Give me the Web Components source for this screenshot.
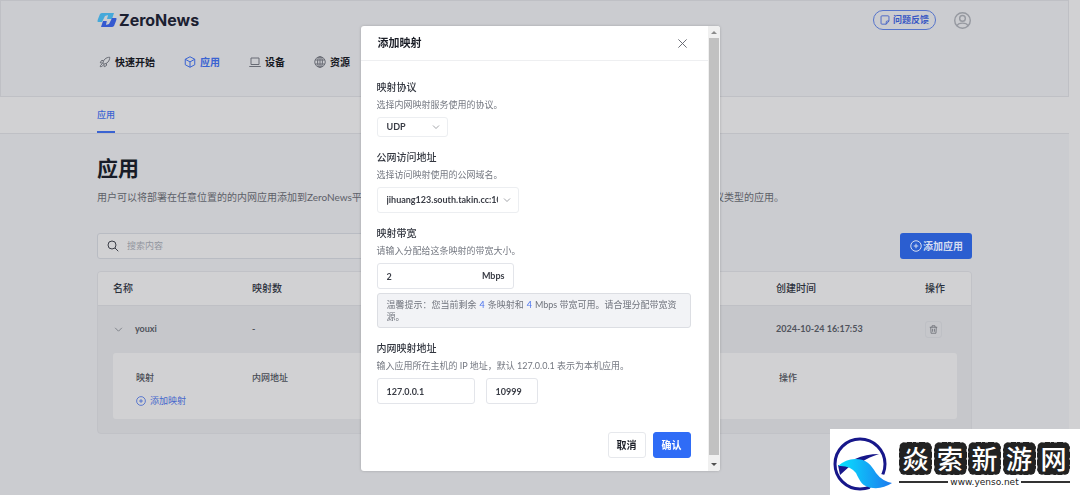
<!DOCTYPE html>
<html lang="zh-CN">
<head>
<meta charset="utf-8">
<title>ZeroNews</title>
<style>
html{background:#d1d1d3}
body{margin:0;min-height:100vh;overflow:hidden;font:10px/16px Lato,"Noto Sans CJK SC",sans-serif;color:#2b303b;
--page:#cbccd0;--surface:#d1d1d3;--line:#bfc0c5;--blue:#3a63d2;--column:875px}
</style>
</head>
<body>
<zn-app></zn-app>
<script>
const box='*{box-sizing:border-box}a{color:inherit;text-decoration:none}button,input,select{font:inherit;color:inherit;margin:0}';
const define=(name,css,html,setup)=>{
  const t=document.createElement('template');
  t.innerHTML=`<style>${box}${css}</style>${html}`;
  customElements.define(name,class extends HTMLElement{
    constructor(){super();this.attachShadow({mode:'open'}).append(t.content.cloneNode(true));}
    connectedCallback(){if(setup)setup(this,this.shadowRoot);}
  });
};

const icons={
  rocket:'<path d="M8 14.500C8 8 14 2.500 21.500 2.500C21.500 10 16 16 9.500 16Z"/><path d="M8.500 9H5L2.500 13.500L8 14.500M15 15V19L10.500 21.500L9.500 16M6 16.500C3 17.500 3 19 2.500 21.500C5 21 7 21 8 18.500"/>',
  cube:'<path d="M12 1.500L21.500 6.500V17.500L12 22.500L2.500 17.500V6.500ZM2.500 6.500L12 11.800L21.500 6.500M12 11.800V22.500"/>',
  laptop:'<path d="M4 4H20V17H4ZM0.500 21H23.500"/>',
  globe:'<circle cx="12" cy="12" r="10.500"/><ellipse cx="12" cy="12" rx="4.800" ry="10.500"/><path d="M2.500 8H21.500M2.500 16H21.500M12 1.500V22.500"/>',
  note:'<path d="M15 22H4.500Q2.500 22 2.500 20V4Q2.500 2 4.500 2H19.500Q21.500 2 21.500 4V14.500L15 22V16.500Q15 14.500 17 14.500H21.500"/>',
  user:'<circle cx="12" cy="12" r="11"/><circle cx="12" cy="9" r="4"/><path d="M4.500 19.500C6 14.500 18 14.500 19.500 19.500"/>',
  search:'<circle cx="10" cy="10" r="8"/><path d="M16 16L22.500 22.500"/>',
  plus:'<circle cx="12" cy="12" r="10.500"/><path d="M12 7.500V16.500M7.500 12H16.500"/>',
  down:'<path d="M3 7.500L12 16.500L21 7.500"/>',
  close:'<path d="M3 3L21 21M21 3L3 21"/>',
  trash:'<path d="M2 6H22M8 6V2H16V6M4.500 6L5.500 22H18.500L19.500 6M9.500 10V18M14.500 10V18"/>'
};
define('zn-icon',':host{display:inline-flex;flex:none;width:12px;height:12px}svg{width:100%;height:100%;fill:none;stroke:currentColor;stroke-width:2;stroke-linejoin:round}',
 '<svg viewBox="0 0 24 24" aria-hidden="true"></svg>',(el,r)=>{r.querySelector('svg').innerHTML=icons[el.getAttribute('name')];});

define('zn-nav-item',':host{display:block;color:#16181f}:host([current]){color:var(--blue)}a{display:flex;align-items:center;gap:4px;font-weight:700}zn-icon{color:#686b74}:host([current]) zn-icon{color:inherit}',
 '<a href="#"><zn-icon name="cube"></zn-icon><slot></slot></a>',(el,r)=>{
   const i=document.createElement('zn-icon');i.setAttribute('name',el.getAttribute('icon'));r.querySelector('zn-icon').replaceWith(i);
 });

define('zn-header',`:host{display:block;background:var(--page);border:1px solid var(--line)}
.in{max-width:var(--column);margin:0 auto;height:95px;padding-top:8px}
.top{display:flex;align-items:center;gap:18px;height:22px}
.brand{display:flex;align-items:center;gap:2px;margin-right:auto;font:700 16px/22px Inter,sans-serif;color:#1b2030}
.brand svg{width:20px;height:16px}
.fb{display:flex;align-items:center;gap:3px;height:20px;padding:0 6px;border:1px solid #5674cb;border-radius:10px;background:none;color:#3858c4;font-size:9px;font-weight:700}
.fb zn-icon{width:10px;height:10px}
.me{border:0;padding:0;background:none;display:flex;color:#9699a0;margin-right:1px}.me zn-icon{width:17px;height:17px}
nav{display:flex;gap:29px;margin-top:23px;padding-left:2px}`,
`<header class="in"><div class="top"><a class="brand" href="#"><svg viewBox="0 0 20 16" aria-hidden="true"><path fill="#46a9da" d="M5 1H17L15 7H9L11 3L8 4L5 10H1Q0 10 1 7L3 2Q4 1 5 1Z"/><path fill="#3559d0" d="M4 15L6 9H11L9 13L12 12L15 6H19Q20 6 19 9L17 14Q16 15 15 15Z"/><path fill="#cbccd0" d="M11 3L7 8H10L9 13L13 7H10Z"/></svg>ZeroNews</a>
<button class="fb"><zn-icon name="note"></zn-icon>问题反馈</button><button class="me" aria-label="账户"><zn-icon name="user"></zn-icon></button></div>
<nav><zn-nav-item icon="rocket">快速开始</zn-nav-item><zn-nav-item icon="cube" current>应用</zn-nav-item><zn-nav-item icon="laptop">设备</zn-nav-item><zn-nav-item icon="globe">资源</zn-nav-item></nav></header>`);

define('zn-tabs',`:host{display:block;background:var(--surface);border-bottom:1px solid var(--line)}
nav{max-width:var(--column);margin:0 auto;display:flex}
a{height:36px;padding-top:10px;border-bottom:2px solid var(--blue);color:var(--blue);font-size:9px;font-weight:500}`,'<nav><a href="#" aria-current="page"><slot></slot></a></nav>');

define('zn-toolbar',`:host{display:flex;justify-content:space-between;gap:12px}
.search{display:flex;align-items:center;gap:8px;width:350px;height:26px;padding:0 9px;border:1px solid #b9bcc3;border-radius:3px;background:var(--surface);color:#3b3e47}
input{flex:1;min-width:0;border:0;padding:0;background:none;outline:0;font-size:9px}
input::placeholder{color:#92969f;opacity:1}
button{display:flex;align-items:center;gap:1px;height:26px;padding:0 9px 0 10px;border:0;border-radius:3px;background:#2b5ed0;color:#d4dcf0;font-weight:700}`,
`<label class="search"><zn-icon name="search"></zn-icon><input type="search" placeholder="搜索内容" aria-label="搜索内容"></label>
<button><zn-icon name="plus"></zn-icon>添加应用</button>`);

define('zn-table',`:host{display:block;border:1px solid #c1c2c7;border-radius:4px;background:#c6c7cb;overflow:hidden}
table{width:100%;border-collapse:collapse;table-layout:fixed}
th{text-align:left;font-weight:500}
th,td{padding:0}
.list>thead th{height:33px;background:var(--surface);border-bottom:1px solid var(--line)}
.list>tbody>tr>td{height:48px;font-size:9px;font-weight:700;color:#50535c}
.first{padding-left:15px!important}
.name{display:flex;align-items:center;gap:12px;padding-left:1px}
.name button{border:0;padding:0;background:none;display:flex;color:#6a6d75}.name zn-icon{width:9px;height:9px}
.del{display:flex;align-items:center;justify-content:center;width:17px;height:17px;padding:0;border:1px solid #bec0c5;border-radius:3px;background:none;color:#64676f}.del zn-icon{width:9px;height:9px}
.list>tbody>tr>td.detail{height:auto;padding:0 14px 14px 15px;font-weight:400}
.sub{background:var(--surface);border-radius:3px;padding:16px 23px 10px;color:#484b54;font-size:9px}
.sub th,.sub td{height:17px}.sub td{padding-top:7px}
.add{display:flex;align-items:center;gap:4px;border:0;padding:0;background:none;color:#4567cc}.add zn-icon{width:10px;height:10px}`,
`<table class="list"><colgroup><col style="width:154px"><col><col style="width:149px"><col style="width:46px"></colgroup>
<thead><tr><th class="first">名称</th><th>映射数</th><th>创建时间</th><th>操作</th></tr></thead>
<tbody><tr><td class="first"><div class="name"><button aria-label="收起"><zn-icon name="down"></zn-icon></button>youxi</div></td><td>-</td><td>2024-10-24 16:17:53</td><td><button class="del" aria-label="删除"><zn-icon name="trash"></zn-icon></button></td></tr>
<tr><td class="detail" colspan="4"><div class="sub"><table><colgroup><col style="width:116px"><col><col style="width:155px"></colgroup><thead><tr><th>映射</th><th>内网地址</th><th>操作</th></tr></thead><tbody><tr><td colspan="3"><button class="add"><zn-icon name="plus"></zn-icon>添加映射</button></td></tr></tbody></table></div></td></tr></tbody></table>`);

define('zn-page',`:host{display:block;background:var(--page);flex:1}
main{max-width:var(--column);margin:0 auto;padding-top:19px}
h1{margin:0;font-size:21px;line-height:30px;font-weight:700;color:#181c27}
p{display:flex;justify-content:space-between;max-width:687px;margin:6px 0 28px;color:#5d6068}
zn-table{margin-top:12px}`,
`<main><h1><slot></slot></h1><p><span>用户可以将部署在任意位置的的内网应用添加到ZeroNews平</span><span>议类型的应用。</span></p><zn-toolbar></zn-toolbar><zn-table></zn-table></main>`);

define('zn-dialog',`:host{display:flex;width:359px;background:#fff;border-radius:3px;box-shadow:0 0 3px #0003;overflow:hidden}
section{flex:1;min-width:0}
header{display:flex;align-items:center;justify-content:space-between;height:35px;padding:0 20px 0 17px;border-bottom:1px solid #eeeff1}
h2{margin:0;font-size:11px;font-weight:700;color:#1b1e27}
header button{display:flex;border:0;padding:0;background:none;color:#60636b}header zn-icon{width:11px;height:11px}
.body{padding:18px 17px 0 16px}
footer{display:flex;justify-content:flex-end;gap:7px;padding:28px 17px 13px}
.bar{width:12px;background:#f0f0f0;display:flex;flex-direction:column;align-items:center}
.bar i{flex:1;width:10px;background:#c1c1c1}
.bar svg{width:12px;height:12px;flex:none}.bar svg:last-child{height:16px}`,
`<section role="dialog" aria-modal="true" aria-labelledby="t"><header><h2 id="t"><slot name="title"></slot></h2><button aria-label="关闭"><zn-icon name="close"></zn-icon></button></header>
<div class="body"><slot></slot></div><footer><slot name="actions"></slot></footer></section>
<div class="bar" aria-hidden="true"><svg viewBox="0 0 12 12"><path fill="#8b8b8b" d="M3 8L6 5L9 8Z"/></svg><i></i><svg viewBox="0 0 12 16"><path fill="#505050" d="M3 8H9L6 11Z"/></svg></div>`);

define('zn-mapping',`:host{position:fixed;inset:26px 0 auto;display:flex;justify-content:center}
form{display:grid;gap:12px}
.l{display:block;margin-bottom:3px;color:#333740;font-weight:500}
p{margin:0 0 5px;font-size:9px;line-height:14px;color:#747881}
.sel{display:flex;align-items:center;position:relative;width:142px}
.sel.s{width:71px}
.sel zn-icon{position:absolute;right:8px;width:8px;height:8px;color:#74777f;pointer-events:none}
select,input,.unit{height:26px;border:1px solid #e3e5ea;border-radius:3px;background:#fff;font-size:9px;font-weight:700;color:#3a3d46;outline:0}
select{appearance:none;width:100%;padding:0 20px 0 9px;border-color:#eceef1;overflow:hidden;text-overflow:clip}
.s select{height:20px}
input{padding:0 9px;min-width:0}
.unit{display:flex;align-items:center;width:137px;padding-right:8px}
.unit input{flex:1;height:24px;border:0;background:none}
.tip{margin:4px 0 0;padding:5px 0 4px 9px;border:1px solid #dcdee3;border-radius:3px;background:#f2f3f6;line-height:12px;color:#70747d}
.tip b{font-weight:400;color:#4a73ee;margin:0 3px}
.pair{display:flex;gap:11px}.ip{width:98px}.port{width:52px}
.act{height:26px;width:38px;padding:0;border:1px solid #e6e8ec;border-radius:3px;background:#fff;color:#1d2029;font-weight:700}
.ok{background:#2f6cf6;border-color:#2f6cf6;color:#fff}`,
`<zn-dialog><span slot="title">添加映射</span><form>
<div><label class="l" for="proto">映射协议</label><p>选择内网映射服务使用的协议。</p><div class="sel s"><select id="proto"><option>UDP</option></select><zn-icon name="down"></zn-icon></div></div>
<div><label class="l" for="addr">公网访问地址</label><p>选择访问映射使用的公网域名。</p><div class="sel"><select id="addr"><option>jihuang123.south.takin.cc:100</option></select><zn-icon name="down"></zn-icon></div></div>
<div><label class="l" for="bw">映射带宽</label><p>请输入分配给这条映射的带宽大小。</p><div class="unit"><input id="bw" value="2">Mbps</div>
<p class="tip">温馨提示&#xFF1A;您当前剩余<b>4</b>条映射和<b>4</b>Mbps 带宽可用。请合理分配带宽资<br>源。</p></div>
<div><label class="l" for="ip">内网映射地址</label><p>输入应用所在主机的 IP 地址&#xFF0C;默认 127.0.0.1 表示为本机应用。</p><div class="pair"><input class="ip" id="ip" value="127.0.0.1"><input class="port" value="10999" aria-label="端口"></div></div>
</form><button slot="actions" class="act">取消</button><button slot="actions" class="act ok">确认</button></zn-dialog>`);

define('zn-sitemark',`:host{position:fixed;right:0;bottom:0;display:flex;gap:12px;width:250px;height:66px;padding:8px 10px 0 3px;background:#fff;color:#222}
.logo{width:59px;height:54px;flex:none;margin-right:-5px}
.r{flex:1;padding-top:5px}
.tiles{display:flex;justify-content:space-between}
.tiles span{position:relative;width:33px;height:33px;text-align:center;color:#fff;font:500 26px/32px "Noto Sans CJK SC",sans-serif;background:#222;border-radius:6px}
.tiles svg{position:absolute;inset:0;width:33px;height:33px;fill:none;stroke:#fff;stroke-width:1;stroke-dasharray:2 5 1 3 3 6}
.url{display:flex;align-items:center;gap:2px;font:9px/14px "DejaVu Sans",sans-serif}
.url::before,.url::after{content:"";flex:1;height:2px;background:#333}`,
`<svg class="logo" viewBox="0 0 59 54" aria-hidden="true"><circle cx="27" cy="27" r="25" fill="none" stroke="#17178a" stroke-width="3"/><path fill="#17178a" d="M22 22Q33 17 46 17Q36 20 29 25ZM5 28L7 38L17 29Z"/><path fill="#fff" d="M36 54L59 47L52 38L44 36Z"/><defs><linearGradient id="g"><stop stop-color="#08e4ff"/><stop offset="1" stop-color="#1c79ee"/></linearGradient></defs><path fill="url(#g)" d="M5 29Q13 22 22 22C34 22 38 28 43 36Q49 44 59 46Q50 52 40 51C29 50 27 44 23 36Q17 28 5 29Z"/></svg>
<div class="r"><div class="tiles"></div><div class="url">www.yenso.net</div></div>`,(el,r)=>{
  r.querySelector('.tiles').innerHTML=[...'焱索新游网'].map(c=>`<span>${c}<svg viewBox="0 0 33 33" aria-hidden="true"><rect x="0" y="0" width="33" height="33" rx="6"/></svg></span>`).join('');
});

define('zn-app',':host{display:flex;flex-direction:column;min-height:100vh;padding-right:11px}',
 '<zn-header></zn-header><zn-tabs>应用</zn-tabs><zn-page>应用</zn-page><zn-mapping></zn-mapping><zn-sitemark></zn-sitemark>');
</script>
</body>
</html>
